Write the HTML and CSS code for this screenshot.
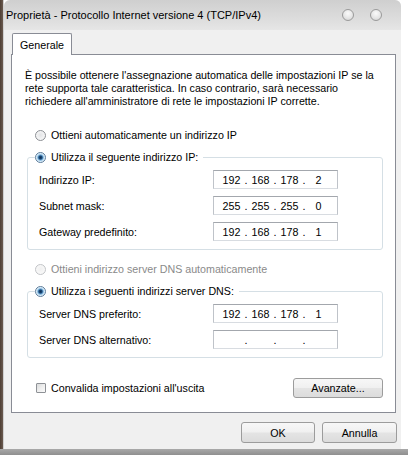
FILE: index.html
```html
<!DOCTYPE html>
<html lang="it">
<head>
<meta charset="utf-8">
<title>Proprietà - Protocollo Internet versione 4 (TCP/IPv4)</title>
<link rel="stylesheet" href="styles.css">
</head>
<body>
<div class="desk">
  <div class="window">
    <div class="titlebar">
      <span class="title">Proprietà - Protocollo Internet versione 4 (TCP/IPv4)</span>
      <div class="tb-buttons"><span class="tb-btn"></span><span class="tb-btn"></span></div>
    </div>
    <div class="client">
      <div class="tabs"><div class="tab">Generale</div></div>
      <div class="panel">
        <p class="intro">È possibile ottenere l'assegnazione automatica delle impostazioni IP se la<br>rete supporta tale caratteristica. In caso contrario, sarà necessario<br>richiedere all'amministratore di rete le impostazioni IP corrette.</p>

        <div class="radio r-top"><span class="rb"></span>Ottieni automaticamente un indirizzo IP</div>

        <fieldset class="group g-ip">
          <legend><span class="radio"><span class="rb on"></span>Utilizza il seguente indirizzo IP:</span></legend>
          <div class="row"><span class="lbl">Indirizzo IP:</span><div class="ip"><span class="seg">192</span><span class="dot">.</span><span class="seg">168</span><span class="dot">.</span><span class="seg">178</span><span class="dot">.</span><span class="seg">2</span></div></div>
          <div class="row"><span class="lbl">Subnet mask:</span><div class="ip"><span class="seg">255</span><span class="dot">.</span><span class="seg">255</span><span class="dot">.</span><span class="seg">255</span><span class="dot">.</span><span class="seg">0</span></div></div>
          <div class="row"><span class="lbl">Gateway predefinito:</span><div class="ip"><span class="seg">192</span><span class="dot">.</span><span class="seg">168</span><span class="dot">.</span><span class="seg">178</span><span class="dot">.</span><span class="seg">1</span></div></div>
        </fieldset>

        <div class="radio r-dns disabled"><span class="rb"></span>Ottieni indirizzo server DNS automaticamente</div>

        <fieldset class="group g-dns">
          <legend><span class="radio"><span class="rb on"></span>Utilizza i seguenti indirizzi server DNS:</span></legend>
          <div class="row"><span class="lbl">Server DNS preferito:</span><div class="ip"><span class="seg">192</span><span class="dot">.</span><span class="seg">168</span><span class="dot">.</span><span class="seg">178</span><span class="dot">.</span><span class="seg">1</span></div></div>
          <div class="row"><span class="lbl">Server DNS alternativo:</span><div class="ip"><span class="seg"></span><span class="dot">.</span><span class="seg"></span><span class="dot">.</span><span class="seg"></span><span class="dot">.</span><span class="seg"></span></div></div>
        </fieldset>

        <div class="bottom">
          <div class="check"><span class="cb"></span>Convalida impostazioni all'uscita</div>
          <button class="btn adv" type="button">Avanzate...</button>
        </div>
      </div>
      <div class="actions">
        <button class="btn ok" type="button">OK</button>
        <button class="btn cancel" type="button">Annulla</button>
      </div>
    </div>
  </div>
</div>
</body>
</html>
```

FILE: styles.css
```css
* { box-sizing: border-box; }
html, body { margin: 0; padding: 0; }
body {
  width: 408px;
  height: 455px;
  overflow: hidden;
  background: #ffffff;
  font-family: "Liberation Sans", Arial, sans-serif;
  font-size: 10.7px;
  color: #000;
}
.desk {
  height: 455px;
  padding-left: 4px;
  background:
    linear-gradient(to bottom, rgba(0,0,0,0) 449px, #a9a9a9 449px, #8f8f8f 455px),
    linear-gradient(to right, #4e3e34 0, #6a5a4f 3px, #cfcfcf 3px, #cfcfcf 4px, #ffffff 4px);
}
.window {
  width: 397px;
  height: 449px;
  background: #f0f0f0;
  border-radius: 6px 6px 0 0;
  display: flex;
  flex-direction: column;
}
.titlebar {
  height: 30px;
  display: flex;
  align-items: center;
  justify-content: space-between;
  padding: 0 19px 0 2px;
  border-radius: 6px 6px 0 0;
  background: linear-gradient(to bottom, #cfcfcf, #dcdcdc 60%, #e6e6e6);
}
.title { font-size: 11px; color: #000; white-space: nowrap; }
.tb-buttons { display: flex; gap: 16px; }
.tb-btn {
  width: 12px;
  height: 12px;
  border-radius: 50%;
  border: 1px solid #9a9a9a;
  background: radial-gradient(circle at 50% 35%, #fafafa 0, #e6e6e6 55%, #cfcfcf 100%);
}
.client {
  padding: 3px 0 0 7px;
  display: flex;
  flex-direction: column;
}
.tabs { display: flex; padding-left: 1px; }
.tab {
  position: relative;
  z-index: 1;
  width: 60px;
  height: 22px;
  margin-bottom: -1px;
  padding: 5px 0 0 7px;
  background: #fff;
  border: 1px solid #898c95;
  border-bottom: none;
  border-radius: 2px 2px 0 0;
  white-space: nowrap;
}
.panel {
  width: 385px;
  height: 359px;
  background: #fff;
  border: 1px solid #898c95;
  padding: 14px 12px 0 13px;
  display: flex;
  flex-direction: column;
}
.intro {
  margin: 0;
  line-height: 13px;
  white-space: nowrap;
}
.radio {
  display: flex;
  align-items: center;
  height: 14px;
  white-space: nowrap;
}
.rb {
  flex: none;
  width: 11px;
  height: 11px;
  margin-right: 5px;
  border-radius: 50%;
  border: 1px solid #8c8f94;
  background: radial-gradient(circle at 50% 45%, #e3e4e6 0, #eeeff0 40%, #fbfbfb 100%);
}
.rb.on {
  border-color: #5b7b9a;
  background: radial-gradient(circle at 50% 50%, #0f2f55 0, #1b4a78 1.6px, #6fa8d6 2.6px, #c5e2f5 3.6px, #eef7fd 4.6px);
}
.disabled { color: #8a8a8a; }
.disabled .rb {
  border-color: #c2c4c7;
  background: radial-gradient(circle at 50% 45%, #f0f0f0 0, #f6f6f6 50%, #fdfdfd 100%);
}
.r-top { margin: 20px 0 0 10px; }
.r-dns { margin: 12px 0 0 10px; }
.group {
  width: 356px;
  margin: 8px 0 0 2px;
  padding: 6px 7px 8px 7px;
  border: 1px solid #d5dfe5;
  border-radius: 3px;
  min-width: 0;
  display: flex;
  flex-direction: column;
  gap: 7px;
}
.group legend {
  padding: 0 5px 0 0;
  margin: 0;
}
.row {
  display: grid;
  grid-template-columns: 174px 125px;
  align-items: center;
  height: 19px;
  margin-left: 4px;
  white-space: nowrap;
}
.ip {
  width: 125px;
  height: 19px;
  display: flex;
  align-items: center;
  padding-left: 6px;
  border: 1px solid;
  border-color: #a3a7ad #bfc3c9 #d8dce1 #bfc3c9;
  background: #fff;
}
.seg { width: 23px; text-align: center; }
.dot { width: 6px; text-align: center; }
.bottom {
  display: flex;
  align-items: center;
  justify-content: space-between;
  margin-top: 20px;
  height: 20px;
}
.check {
  display: flex;
  align-items: center;
  margin-left: 11px;
  white-space: nowrap;
}
.cb {
  width: 10px;
  height: 10px;
  margin-right: 5px;
  border: 1px solid #8e9196;
  border-radius: 1px;
  background: linear-gradient(135deg, #d9dadb 0, #eeeeee 50%, #fbfbfb 100%);
}
.btn {
  font-family: inherit;
  font-size: 10.7px;
  color: #000;
  border: 1px solid #9c9c9c;
  border-radius: 3px;
  background: linear-gradient(to bottom, #f7f7f7 0, #f0f0f0 48%, #e4e4e4 52%, #dcdcdc 100%);
  padding: 0;
  margin: 0;
}
.adv { width: 90px; height: 20px; }
.actions {
  width: 386px;
  display: flex;
  justify-content: flex-end;
  gap: 7px;
  margin-top: 9px;
}
.ok { width: 74px; height: 21px; }
.cancel { width: 75px; height: 21px; }
```
